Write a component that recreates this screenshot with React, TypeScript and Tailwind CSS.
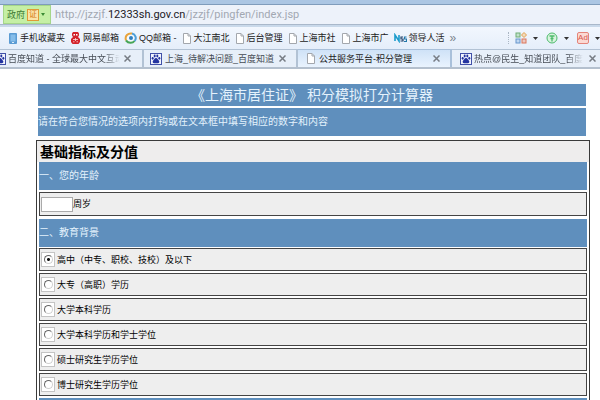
import React, { useState } from "react";

interface OptionData {
    id: string;
    label: string;
}

const educationOptions: OptionData[] = [
    { id: "gaozhong", label: "高中（中专、职校、技校）及以下" },
    { id: "dazhuan", label: "大专（高职）学历" },
    { id: "benke", label: "大学本科学历" },
    { id: "xueshi", label: "大学本科学历和学士学位" },
    { id: "shuoshi", label: "硕士研究生学历学位" },
    { id: "boshi", label: "博士研究生学历学位" },
];

const PageIcon = () => (
    <svg className="shrink-0" width="10" height="11" viewBox="0 0 10 11" fill="#fff" stroke="#a3a7ad">
        <path d="M1.5 .5h4.5l2.5 2.5v7.5h-7z" />
        <path d="M6 .5v2.5h2.5" fill="none" />
    </svg>
);

const PhoneIcon = () => (
    <svg className="shrink-0" width="10" height="11" viewBox="0 0 10 11">
        <rect x="1" y="0" width="8" height="11" rx="1" fill="#5b9bd3" />
        <rect x="2.5" y="1.5" width="5" height="7" fill="#86bdea" />
        <rect x="4" y="9" width="2" height="1" fill="#dcecf9" />
    </svg>
);

const NeteaseIcon = () => (
    <svg className="shrink-0" width="11" height="12" viewBox="0 0 11 12">
        <path d="M3 0h5l1 1.500v2L8 5l2 2v3l-1.500 2h-6L1 10V7l2-2-1-1.500v-2z" fill="#d3232b" />
        <path d="M3.500 2h1.500v1.500H3.500zM6 2h1.500v1.500H6z" fill="#fff" />
        <path d="M3 7.500h5M3 9.800h1.500M6.500 9.800H8M5.500 6v3" fill="none" stroke="#fbdcdc" strokeWidth=".8" />
    </svg>
);

const QQMailIcon = () => (
    <svg className="shrink-0" width="13" height="12" viewBox="0 0 13 12" fill="none" strokeWidth="2">
        <circle cx="6.500" cy="6" r="4" fill="#f4f9fd" />
        <path d="M2 8.500C.5 4 4 .8 8 1.500" stroke="#e8a33a" />
        <path d="M8 1.500c3.500.7 5 5 2.500 7.500" stroke="#4d9fd8" />
        <path d="M10.500 9c-2 2.500-6 2.500-8.500-.5" stroke="#46a557" />
        <circle cx="7" cy="6" r="1" stroke="#2f7fc0" />
    </svg>
);

const NewsIcon = () => (
    <svg className="shrink-0" width="13" height="10" viewBox="0 0 13 10" fill="none">
        <path d="M1 8V2l4 6V2" stroke="#1b9ccc" strokeWidth="1.600" />
        <path d="M9 4H7v2h2v2H6.500" stroke="#22436b" strokeWidth="1.200" />
        <path d="M12.500 4h-2v2h2v2.500h-2.500" stroke="#2277aa" strokeWidth="1.200" />
    </svg>
);

const PawIcon = () => (
    <svg className="shrink-0" width="12" height="12" viewBox="0 0 12 12">
        <rect x=".5" y=".5" width="11" height="11" fill="#f1f4fc" stroke="#4050a8" />
        <g fill="#2333a0">
            <ellipse cx="2.700" cy="5.300" rx="1" ry="1.400" />
            <ellipse cx="4.700" cy="3" rx="1" ry="1.400" />
            <ellipse cx="7.300" cy="3" rx="1" ry="1.400" />
            <ellipse cx="9.300" cy="5.300" rx="1" ry="1.400" />
            <path d="M6 5c1.500 0 1.800 1.600 2.800 2.500 1.200 1.300.4 2.900-1.200 2.800-1-.1-2.200-.1-3.200 0-1.600.1-2.400-1.500-1.200-2.800C4.200 6.600 4.500 5 6 5z" />
        </g>
    </svg>
);

const GridIcon = () => (
    <svg width="12" height="12" viewBox="0 0 12 12" fillOpacity=".45" strokeWidth="1">
        <rect x="1" y="1" width="4" height="4" fill="#8fc98f" stroke="#6fae77" />
        <path d="M9 .5l2.500 2.500L9 5.500 6.500 3z" fill="#f5bd70" stroke="#e5a04d" />
        <rect x="1" y="7" width="4" height="4" fill="#8db8e4" stroke="#6796cc" />
        <rect x="7" y="7" width="4" height="4" fill="#ee9479" stroke="#dc765b" />
    </svg>
);

const CoinIcon = () => (
    <svg width="12" height="12" viewBox="0 0 12 12" fill="none" stroke="#4dbb6c">
        <circle cx="6" cy="6" r="5" fill="#d9f3df" />
        <path d="M3.500 4h5M6 4v5.500M4.500 6.500h3" strokeWidth="1.300" />
    </svg>
);

const Caret = () => (
    <svg className="shrink-0" width="5" height="3" viewBox="0 0 5 3" fill="#333">
        <path d="M0 0h5L2.500 3z" />
    </svg>
);

const TabClose = () => (
    <button type="button" aria-label="关闭" className="ml-auto shrink-0">
        <svg width="7" height="7" viewBox="0 0 7 7" stroke="#777c84" strokeWidth="1.500">
            <path d="M.5.5l6 6M6.500.5l-6 6" />
        </svg>
    </button>
);

const Bookmark = ({ icon, label }: { icon: React.ReactNode; label: string }) => (
    <a href="#" className="flex shrink-0 items-center gap-[2px] whitespace-nowrap">
        {icon}
        <span>{label}</span>
    </a>
);

const SectionBar = ({ title }: { title: string }) => (
    <h3 className="flex h-7 items-center bg-[#5f8fbd] text-[10px] text-[#e4f2fc]">{title}</h3>
);

export default function App() {
    const [age, setAge] = useState("");
    const [education, setEducation] = useState("gaozhong");

    return (
        <div className="h-screen overflow-hidden bg-white font-['Liberation_Sans','Noto_Sans_CJK_SC',sans-serif] text-[9px] leading-[14px] text-[#222]">
            <header>
                {/* 地址栏 */}
                <div className="h-[5px] border-b border-[#7f9cbb] bg-[#abc6e3]" />
                <div className="flex h-[19px] items-center bg-[#edf2fa] pl-[3px]">
                    <button type="button" className="flex h-[19px] w-12 items-center gap-[2px] border border-[#a5d68a] bg-[#c5efa5] pl-[3px] text-[#3f7d35]">
                        <span>政府</span>
                        <span className="border border-[#e09a35] bg-[#fbe3a8] px-px text-[8px] leading-[10px] text-[#d47a15]">证</span>
                        <svg width="4" height="3" viewBox="0 0 4 3" fill="#3c8a34"><path d="M0 0h4L2 3z" /></svg>
                    </button>
                    <p className="pl-1 font-[Roboto,sans-serif] text-[11px] text-[#a2a8b2]">
                        http://jzzjf.<span className="text-[#1c2026]">12333sh.gov.cn</span>/jzzjf/pingfen/index.jsp
                    </p>
                </div>
                <div className="h-[3px] border-t border-[#a9b8ca] bg-[#c9d9ea]" />

                {/* 收藏栏 */}
                <nav className="flex h-[22px] items-center gap-[5px] bg-gradient-to-b from-[#f2f7fe] to-[#e5eefa] pl-2">
                    <Bookmark icon={<PhoneIcon />} label="手机收藏夹" />
                    <Bookmark icon={<NeteaseIcon />} label="网易邮箱" />
                    <Bookmark icon={<QQMailIcon />} label="QQ邮箱 -" />
                    <Bookmark icon={<PageIcon />} label="大江南北" />
                    <Bookmark icon={<PageIcon />} label="后台管理" />
                    <Bookmark icon={<PageIcon />} label="上海市社" />
                    <Bookmark icon={<PageIcon />} label="上海市广" />
                    <Bookmark icon={<NewsIcon />} label="领导人活" />
                    <span className="text-[12px] text-[#7d858f]">»</span>
                    <div className="ml-auto flex shrink-0 items-center gap-2">
                        <button type="button" className="flex items-center gap-[6px] border-l border-dotted border-[#aab6c4] pl-[6px]"><GridIcon /><Caret /></button>
                        <button type="button" className="flex items-center gap-[6px]"><CoinIcon /><Caret /></button>
                        <button type="button" className="flex items-center gap-[6px]">
                            <span className="flex h-3 w-3 items-center justify-center rounded-[2px] border border-[#e4857b] bg-[#fbd9d3] text-[8px] text-[#d9574b]">Ad</span>
                            <Caret />
                        </button>
                    </div>
                </nav>

                {/* 标签页 */}
                <div className="flex h-5 border-b-2 border-[#b4c0ce] bg-[#d3e0ef] text-[#454b54]">
                    <div className="flex w-[144px] shrink-0 items-center gap-[2px] overflow-hidden border-r-2 border-t border-[#b2c2d4] bg-[#e7eff9] pr-[11px]">
                        <span className="flex w-[6px] shrink-0 justify-end overflow-hidden"><PawIcon /></span>
                        <span className="w-[112px] overflow-hidden whitespace-nowrap [mask-image:linear-gradient(to_left,transparent,#000_16px)]">百度知道 - 全球最大中文互动</span>
                        <TabClose />
                    </div>
                    <div className="flex w-[154px] shrink-0 items-center gap-[3px] border-r-2 border-t border-[#b2c2d4] bg-[#e7eff9] pl-[6px] pr-[10px]">
                        <PawIcon />
                        <span className="whitespace-nowrap">上海_待解决问题_百度知道</span>
                        <TabClose />
                    </div>
                    <div className="flex w-[154px] shrink-0 items-center gap-[3px] border-r-2 border-t border-[#a9c0da] bg-gradient-to-b from-[#cfe2f7] to-[#e9f3fe] pl-2 pr-[10px] text-[#222]">
                        <PageIcon />
                        <span className="whitespace-nowrap">公共服务平台-积分管理</span>
                        <TabClose />
                    </div>
                    <div className="flex min-w-0 flex-1 items-center gap-[2px] border-t border-[#b2c2d4] bg-[#e7eff9] pl-2 pr-1">
                        <PawIcon />
                        <span className="mr-1 min-w-0 overflow-hidden whitespace-nowrap [mask-image:linear-gradient(to_left,transparent,#000_16px)]">热点@民生_知道团队_百度知道</span>
                        <TabClose />
                    </div>
                </div>
            </header>

            <main className="pb-4 pl-9 pr-[10px] pt-[15px] text-black">
                <div className="flex flex-col gap-[2px] pb-1 pl-[2px] pr-1">
                    <h1 className="flex h-[22px] items-center justify-center bg-[#5f8fbd] text-[14px] text-[#e4f2fc]">
                        <span>《上海市居住证》 积分模拟打分计算器</span>
                    </h1>
                    <p className="flex h-7 items-center bg-[#5f8fbd] text-[10px] text-[#e4f2fc]">
                        请在符合您情况的选项内打钩或在文本框中填写相应的数字和内容
                    </p>
                </div>

                <form className="border border-[#3a3a3a]">
                    <h2 className="flex h-[21px] items-center bg-[#eeeded] pl-[3px] text-[14px] font-bold">基础指标及分值</h2>
                    <div className="flex flex-col gap-[3px] px-[2px]">
                        <section className="flex flex-col gap-[2px]">
                            <SectionBar title="一、您的年龄" />
                            <div className="flex h-6 items-center border border-[#444] bg-[#eee] pl-px">
                                <input
                                    id="age"
                                    type="text"
                                    value={age}
                                    onChange={(e) => setAge(e.target.value)}
                                    className="h-[15px] w-8 border border-[#aaa] bg-white px-px outline-none"
                                />
                                <label htmlFor="age">周岁</label>
                            </div>
                        </section>

                        <section className="flex flex-col gap-px">
                            <SectionBar title="二、教育背景" />
                            <div className="flex flex-col gap-[2px]">
                                {educationOptions.map((option) => (
                                    <div key={option.id} className="flex h-[23px] items-center gap-[2px] border border-[#444] bg-[#eee] pl-px">
                                        <span className="flex h-[15px] w-[14px] items-center justify-center border border-[#c4c4c4] bg-white">
                                            <input
                                                id={option.id}
                                                type="radio"
                                                name="education"
                                                value={option.id}
                                                checked={education === option.id}
                                                onChange={() => setEducation(option.id)}
                                                className="h-[9px] w-[9px] appearance-none rounded-full border border-b-[#d0d0d0] border-l-[#666] border-r-[#d0d0d0] border-t-[#666] bg-white checked:bg-[radial-gradient(circle,#111_0_1px,#fff_2px)]"
                                            />
                                        </span>
                                        <label htmlFor={option.id}>{option.label}</label>
                                    </div>
                                ))}
                            </div>
                        </section>
                        <div className="-mt-px h-7 bg-[#5f8fbd]" />
                    </div>
                </form>
            </main>
        </div>
    );
}
